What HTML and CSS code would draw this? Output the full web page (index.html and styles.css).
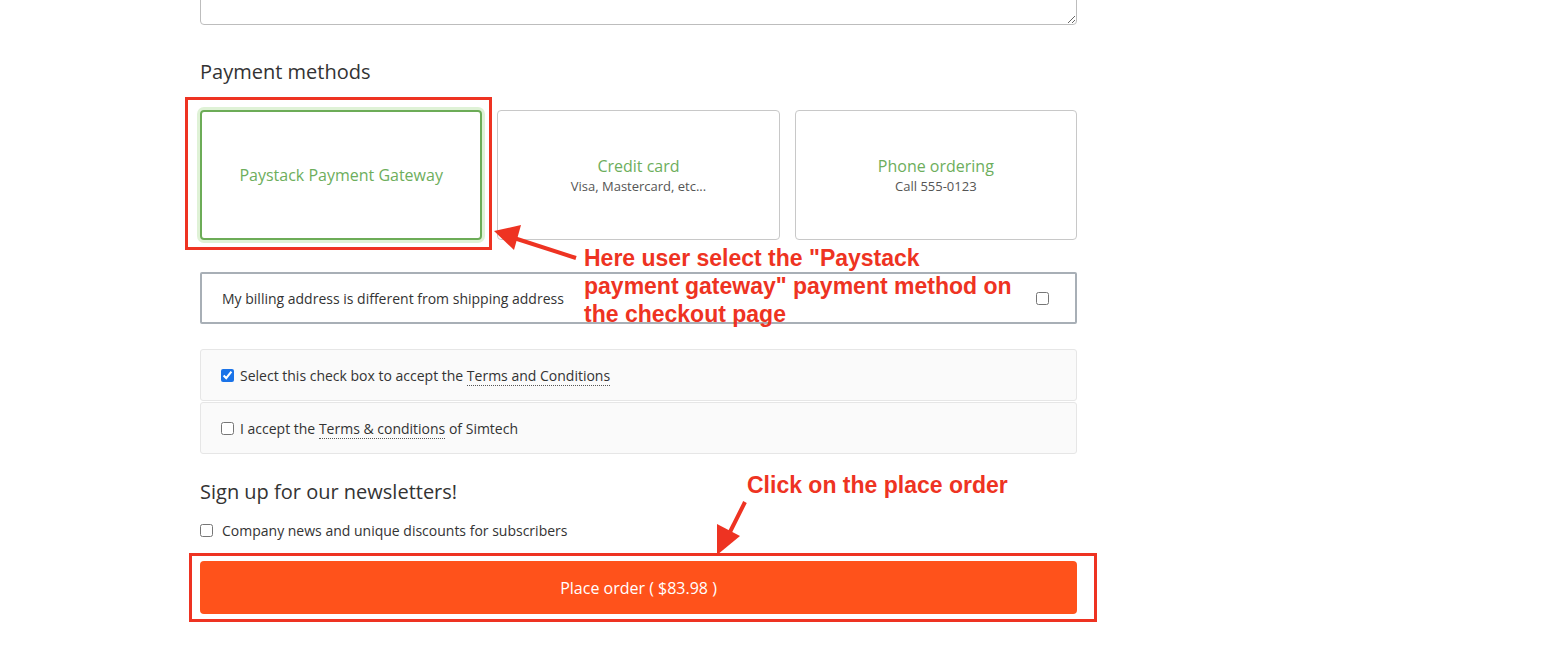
FILE: index.html
```html
<!DOCTYPE html>
<html lang="en">
<head>
  <meta charset="UTF-8">
  <title>Checkout - Payment</title>
  <link rel="stylesheet" href="styles.css">
</head>
<body>

<div class="page">
  <div class="checkout">
    <!-- Notes (cut off at the top) -->
    <textarea class="notes"></textarea>

    <h3 class="section-title">Payment methods</h3>
    <div class="methods">
      <div class="method active">
        <div class="method-name">Paystack Payment Gateway</div>
      </div>
      <div class="method">
        <div class="method-name">Credit card</div>
        <div class="method-desc">Visa, Mastercard, etc...</div>
      </div>
      <div class="method">
        <div class="method-name">Phone ordering</div>
        <div class="method-desc">Call 555-0123</div>
      </div>
    </div>

    <label class="billing">
      <span>My billing address is different from shipping address</span>
      <input type="checkbox">
    </label>

    <div class="terms">
      <label class="terms-row">
        <input type="checkbox" checked>
        <span>Select this check box to accept the <a href="#">Terms and Conditions</a></span>
      </label>
      <label class="terms-row">
        <input type="checkbox">
        <span>I accept the <a href="#">Terms &amp; conditions</a> of Simtech</span>
      </label>
    </div>

    <h3 class="section-title news-title">Sign up for our newsletters!</h3>
    <label class="news-row">
      <input type="checkbox">
      <span>Company news and unique discounts for subscribers</span>
    </label>

    <button class="place-order" type="submit">Place order ( $83.98 )</button>
  </div>

  <!-- Annotations -->
  <svg class="marks" width="1541" height="656" viewBox="0 0 1541 656">
    <rect x="186.5" y="98.5" width="304" height="150" fill="none" stroke="#ee3322" stroke-width="3"/>
    <rect x="190.5" y="554.5" width="905" height="66" fill="none" stroke="#ee3322" stroke-width="3"/>
    <line x1="576" y1="258" x2="514" y2="238" stroke="#ee3322" stroke-width="4"/>
    <polygon points="494,231 521,225 514,250" fill="#ee3322"/>
    <line x1="745" y1="502" x2="730" y2="532" stroke="#ee3322" stroke-width="4"/>
    <polygon points="717,555 717,524 740,536" fill="#ee3322"/>
  </svg>
  <div class="note note-method">Here user select the "Paystack<br>payment gateway" payment method on<br>the checkout page</div>
  <div class="note note-order">Click on the place order</div>
</div>

</body>
</html>
```

FILE: styles.css
```css
body {
  margin: 0;
  padding: 0;
  background: #ffffff;
  font-family: "Open Sans", "Noto Sans", sans-serif;
  color: #333;
  font-size: 14px;
}

.page {
  position: relative;
  width: 1541px;
  height: 656px;
  overflow: hidden;
}

.checkout {
  width: 877px;
  margin-left: 200px;
  display: flex;
  flex-direction: column;
}

.notes {
  display: block;
  width: 100%;
  height: 60px;
  margin: -35px 0 0;
  box-sizing: border-box;
  border: 1px solid #bdbdbd;
  border-radius: 4px;
  resize: vertical;
}

.section-title {
  margin: 35px 0 26px;
  font-size: 20px;
  line-height: 24px;
  font-weight: 400;
  color: #333;
}

.methods {
  display: grid;
  grid-template-columns: repeat(3, 1fr);
  gap: 15px;
}

.method {
  height: 130px;
  box-sizing: border-box;
  border: 1px solid #c8c8c8;
  border-radius: 4px;
  display: flex;
  flex-direction: column;
  align-items: center;
  justify-content: center;
  text-align: center;
}

.method.active {
  border: 2px solid #6cac57;
  box-shadow: 0 0 0 3px #dff2d6;
}

.method-name {
  color: #6dae5c;
  font-size: 16px;
  line-height: 22px;
}

.method-desc {
  color: #555;
  font-size: 13px;
  line-height: 18px;
}

.billing {
  margin-top: 32px;
  height: 52px;
  box-sizing: border-box;
  border: 2px solid #a8afb6;
  border-radius: 2px;
  display: flex;
  align-items: center;
  justify-content: space-between;
  padding: 0 26px 0 20px;
}

.billing input {
  margin: 0;
  width: 13px;
  height: 13px;
}

.terms {
  margin-top: 25px;
  display: flex;
  flex-direction: column;
  gap: 1px;
}

.terms-row {
  height: 52px;
  box-sizing: border-box;
  background: #fafafa;
  border: 1px solid #e6e6e6;
  border-radius: 3px;
  display: flex;
  align-items: center;
  gap: 6px;
  padding: 0 20px;
}

.terms-row input,
.news-row input {
  margin: 0;
  width: 13px;
  height: 13px;
  accent-color: #1a73e8;
}

.terms a {
  color: #333;
  text-decoration: none;
  border-bottom: 1px dotted #555;
}

.news-title {
  margin: 26px 0 16px;
}

.news-row {
  display: flex;
  align-items: center;
  gap: 9px;
  height: 20px;
}

.place-order {
  margin-top: 21px;
  height: 53px;
  border: none;
  border-radius: 4px;
  background: #ff521b;
  color: #fff;
  font-family: "Open Sans", sans-serif;
  font-size: 16px;
  cursor: pointer;
}

.marks {
  position: absolute;
  top: 0;
  left: 0;
}

.note {
  position: absolute;
  font-family: "Liberation Sans", Arial, sans-serif;
  font-weight: bold;
  font-size: 23px;
  line-height: 28px;
  color: #ee3322;
}

.note-method {
  left: 584px;
  top: 244px;
}

.note-order {
  left: 747px;
  top: 471px;
}
```
